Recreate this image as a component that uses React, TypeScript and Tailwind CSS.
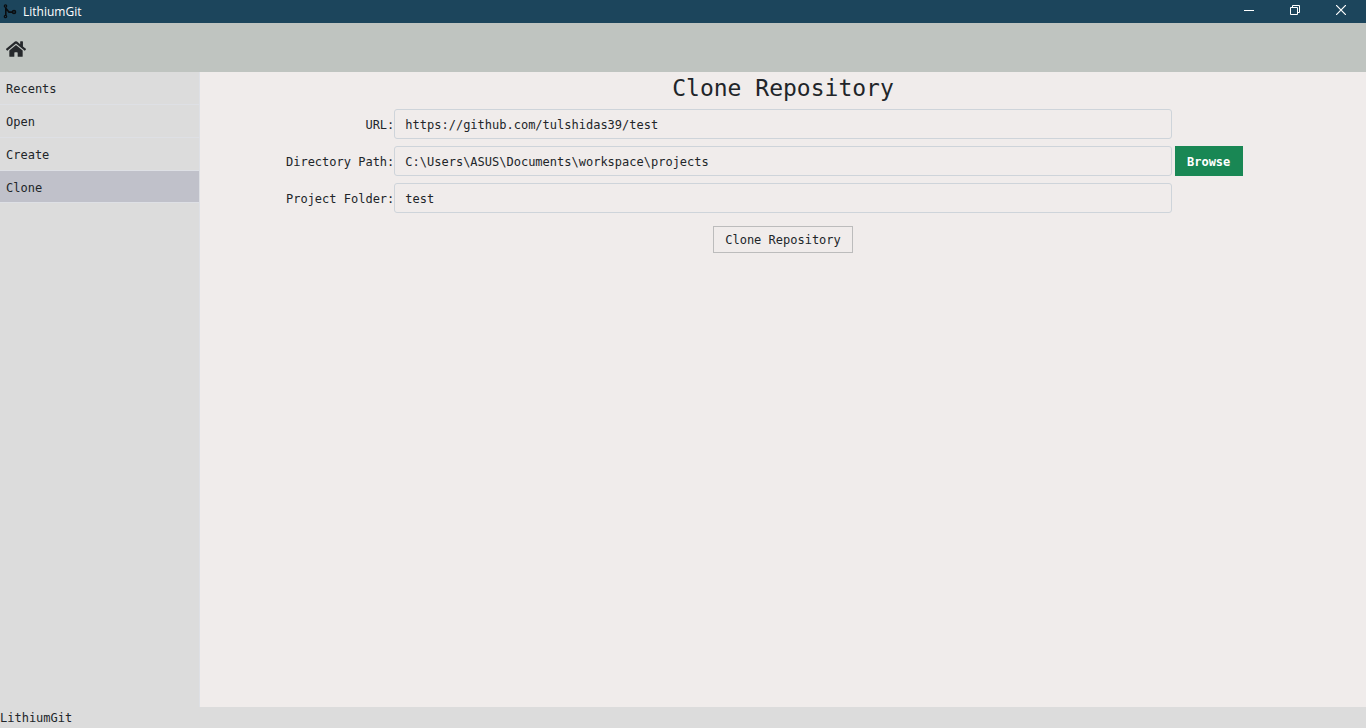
import React, { useState } from "react";

const NAV_ITEMS = ["Recents", "Open", "Create", "Clone"];

function AppLogo() {
  return (
    <svg className="h-4 w-4" viewBox="0 0 16 16" fill="none" stroke="#0a0d10" aria-hidden="true">
      <circle cx="2.5" cy="2" r="1.2" strokeWidth="1.2" />
      <circle cx="2.5" cy="12.5" r="1.2" strokeWidth="1.2" />
      <circle cx="11" cy="8" r="1.5" strokeWidth="1.6" />
      <path d="M2.8 3.2v8M3 4.5l3 3.6h3.5" strokeWidth="1.6" />
    </svg>
  );
}

function HomeIcon() {
  return (
    <svg className="h-[18px] w-5" viewBox="0 0 576 512" fill="#25282b" aria-hidden="true">
      <path d="M280.37 148.26L96 300.11V464a16 16 0 0 0 16 16l112.06-.29a16 16 0 0 0 15.92-16V368a16 16 0 0 1 16-16h64a16 16 0 0 1 16 16v95.64a16 16 0 0 0 16 16.05L464 480a16 16 0 0 0 16-16V300L295.67 148.26a12.19 12.19 0 0 0-15.3 0zM571.6 251.47L488 182.56V44.05a12 12 0 0 0-12-12h-56a12 12 0 0 0-12 12v72.61L318.47 43a48 48 0 0 0-61 0L4.34 251.47a12 12 0 0 0-1.6 16.9l25.5 31A12 12 0 0 0 45.15 301l235.22-193.74a12.19 12.19 0 0 1 15.3 0L530.9 301a12 12 0 0 0 16.9-1.6l25.5-31a12 12 0 0 0-1.7-16.93z" />
    </svg>
  );
}

function TitleBar() {
  return (
    <header className="flex h-[23px] shrink-0 items-center bg-[#1c455c] pl-[3px] text-white">
      <AppLogo />
      <span className="ml-1 font-['Open_Sans',sans-serif] text-xs leading-4">LithiumGit</span>
      <div className="ml-auto flex h-full pb-[3px] pr-[2px]">
        <button aria-label="Minimize" className="flex w-[46px] items-center justify-center">
          <svg className="h-[10px] w-[10px]" viewBox="0 0 10 10" aria-hidden="true">
            <path d="M0 5h10v1H0z" fill="#fff" />
          </svg>
        </button>
        <button aria-label="Restore" className="flex w-[46px] items-center justify-center">
          <svg className="h-[10px] w-[10px]" viewBox="0 0 10 10" fill="none" stroke="#fff" aria-hidden="true">
            <path d="M.5 2.5h7v7h-7zM2.5 2.5v-2h7v7h-2" />
          </svg>
        </button>
        <button aria-label="Close" className="flex w-[46px] items-center justify-center">
          <svg className="h-[10px] w-[10px]" viewBox="0 0 10 10" fill="none" stroke="#fff" strokeWidth="1.2" aria-hidden="true">
            <path d="M0 0l10 10M10 0L0 10" />
          </svg>
        </button>
      </div>
    </header>
  );
}

type FieldProps = {
  id: string;
  label: string;
  value: string;
  onChange: (value: string) => void;
  children?: React.ReactNode;
};

function Field({ id, label, value, onChange, children }: FieldProps) {
  return (
    <div className="grid grid-cols-[1fr_4fr_1fr] items-center">
      <label htmlFor={id} className="whitespace-nowrap pt-[2px] text-right">
        {label}
      </label>
      <input
        id={id}
        value={value}
        onChange={(e) => onChange(e.target.value)}
        className="h-[30px] w-full min-w-0 rounded-[3px] border border-[#ced4da] bg-transparent px-[10px] pt-[2px] outline-none"
      />
      <div className="pl-[3px]">{children}</div>
    </div>
  );
}

export default function App() {
  const [active, setActive] = useState("Clone");
  const [url, setUrl] = useState("https://github.com/tulshidas39/test");
  const [directory, setDirectory] = useState("C:\\Users\\ASUS\\Documents\\workspace\\projects");
  const [folder, setFolder] = useState("test");

  return (
    <div className="flex h-screen flex-col bg-[#dcdcdc] font-['DejaVu_Sans_Mono',monospace] text-xs text-[#212529]">
      <TitleBar />
      <div className="flex h-[49px] shrink-0 items-center bg-[#bfc4c0] px-[6px] pt-[2px]">
        <button aria-label="Home">
          <HomeIcon />
        </button>
      </div>
      <div className="flex min-h-0 flex-1">
        <nav className="w-[200px] shrink-0 border-r border-[#dee0e5]">
          {NAV_ITEMS.map((item) => (
            <button
              key={item}
              onClick={() => setActive(item)}
              className={`flex h-[33px] w-full items-center border-b border-[#dee0e5] px-[6px] pt-[2px] text-left last:h-8 ${
                item === active ? "bg-[#c0c1ca]" : ""
              }`}
            >
              {item}
            </button>
          ))}
        </nav>
        <main className="min-w-0 flex-1 bg-[#f0eceb]">
          <h1 className="pb-[5px] text-center text-[23px] leading-8">Clone Repository</h1>
          <form className="flex flex-col gap-[7px]" onSubmit={(e) => e.preventDefault()}>
            <Field id="url" label="URL:" value={url} onChange={setUrl} />
            <Field id="directory" label="Directory Path:" value={directory} onChange={setDirectory}>
              <button type="button" className="h-[30px] w-[68px] bg-[#198754] pt-[2px] font-bold text-white">
                Browse
              </button>
            </Field>
            <Field id="folder" label="Project Folder:" value={folder} onChange={setFolder} />
            <div className="flex justify-center pt-[6px]">
              <button type="submit" className="h-[27px] w-[140px] border border-[#bcbcbc]">
                Clone Repository
              </button>
            </div>
          </form>
        </main>
      </div>
      <footer className="h-[21px] shrink-0 pt-px leading-5">LithiumGit</footer>
    </div>
  );
}
